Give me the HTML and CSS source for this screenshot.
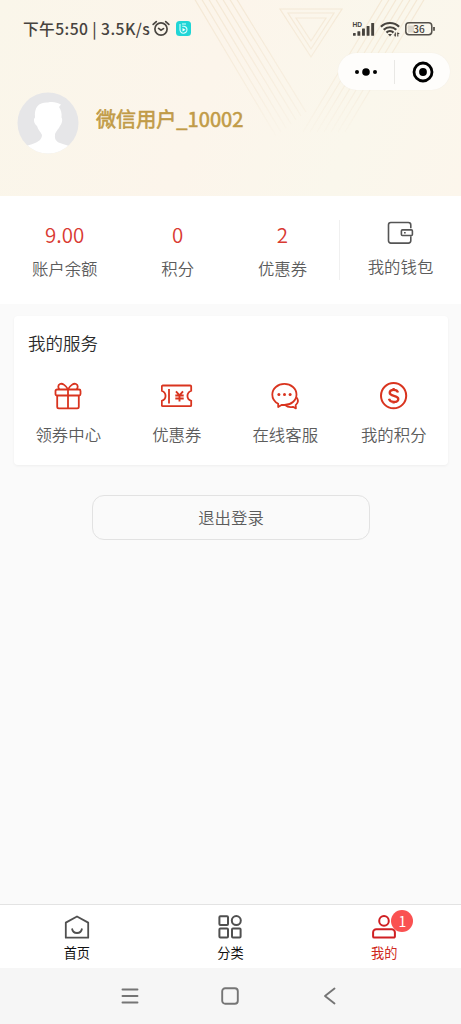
FILE: index.html
```html
<!DOCTYPE html>
<html lang="zh-CN">
<head>
<meta charset="utf-8">
<meta name="viewport" content="width=device-width, initial-scale=1">
<title>我的</title>
<link rel="stylesheet" href="styles.css">
</head>
<body>
<div class="screen">
  <header class="hero">
    <svg class="hero-art" width="461" height="196" viewBox="0 0 461 196" fill="none">
      <defs>
        <linearGradient id="fade" x1="0" y1="0" x2="0" y2="1"><stop offset="0" stop-color="#fff"/><stop offset=".7" stop-color="#fff" stop-opacity=".45"/><stop offset="1" stop-color="#fff" stop-opacity="0"/></linearGradient>
        <mask id="soft"><rect width="461" height="140" fill="url(#fade)"/></mask>
      </defs>
      <g mask="url(#soft)" stroke="#f4e8d5" stroke-width="1.2">
        <path d="M194-2l82 138M201-2l80 134M208-2l78 130M215-2l76 126M222-2l74 122M229-2l72 118M236-2l70 114"/>
        <path d="M383-2l-80 134M390-2l-80 134M397-2l-80 134M404-2l-80 134M411-2l-80 134M418-2l-80 134M425-2l-80 134"/>
        <path d="M280 9h62l-31 48zM288 13h46l-23 36zM296 18h30l-15 23z"/>
      </g>
    </svg>
    <div class="status">
      <div class="status-left">
        <span class="clock">下午5:50 | 3.5K/s</span>
        <svg width="18" height="17" viewBox="0 0 18 17" fill="none" stroke="#4a4641" stroke-width="1.7" stroke-linecap="round"><circle cx="9" cy="9" r="6.1"/><path d="M6.6 8.4L9 10.2l2.5-1.6M1.2 4.4L4.3 1.6M16.8 4.4l-3.1-2.8"/></svg>
        <svg class="app-icon" width="15" height="15" viewBox="0 0 15 15" fill="none"><rect width="15" height="15" rx="3.5" fill="#20d5d6"/><path d="M4 3v5.500a3.500 3.500 0 1 0 3.500-3.300H6.200M6 3h4" stroke="#d9ffff" stroke-width="1.1"/><path d="M6.500 7l3 1.700-3 1.700z" fill="#fff"/></svg>
      </div>
      <div class="status-right">
        <svg class="signal" width="24" height="22" viewBox="-2 -3 24 22"><g fill="#47433e"><rect x="0" y="12" width="2.700" height="2.800" rx=".5"/><rect x="4.400" y="10.200" width="2.900" height="4.600" rx=".5"/><rect x="9" y="7.500" width="2.900" height="7.300" rx=".5"/><rect x="13.600" y="5" width="2.900" height="9.800" rx=".5"/><rect x="18.200" y="2" width="2.900" height="12.800" rx=".5"/></g><text class="hd" x="-.6" y="6.300">HD</text></svg>
        <svg width="20" height="16" viewBox="0 0 20 16" fill="none" stroke="#47433e" stroke-width="2.200"><path d="M.9 5.700a13 13 0 0 1 18.200 0M3.700 8.800a9 9 0 0 1 12.600 0M6.500 11.600a5 5 0 0 1 7 0"/><path d="M8 13h4l-2 2.600z" fill="#47433e" stroke="none"/><path d="M15.300 11.500v4M17.800 11.500v4" stroke-width="1.100"/><path d="M13.900 14h1.700M17.600 12.500h1.700" stroke-width="1"/></svg>
        <svg width="31" height="14" viewBox="0 0 31 14" fill="none"><path d="M3 3.500h6v7H3z" fill="#ddd8cf"/><rect x=".8" y=".8" width="26" height="12" rx="3.200" stroke="#55514b" stroke-width="1.500"/><path d="M29 5v3.800" stroke="#55514b" stroke-width="1.800"/><text class="battery" x="14" y="10.500">36</text></svg>
      </div>
    </div>
    <div class="capsule">
      <svg width="24" height="10" viewBox="0 0 24 10"><circle cx="3" cy="5" r="2"/><circle cx="12" cy="5" r="3.800"/><circle cx="21" cy="5" r="2"/></svg>
      <i class="capsule-line"></i>
      <svg width="22" height="22" viewBox="0 0 22 22"><circle cx="11" cy="11" r="9" fill="none" stroke="#000" stroke-width="2.800"/><circle cx="11" cy="11" r="3.900"/></svg>
    </div>
    <div class="profile">
      <svg width="62" height="62" viewBox="0 0 62 62"><defs><clipPath id="round"><circle cx="31" cy="31" r="30.500"/></clipPath></defs><g clip-path="url(#round)"><path fill="#e6e6e8" d="M0 0h62v62H0z"/><path fill="#fff" d="M18 25.500C17 15 22 10 31 10.500C36 9.500 40 10.500 44 12.500L42 15C44 18 45 21 44.500 25.500C46 27 45 32 43 34C41 38 38 40 38 43C37.500 47 39 49.500 43 51C48 52.500 52 54 56 56V62H5V56C9 54 14 52.500 18 51C23 49 25 46 25 43C24 40 21 38 20 34C17 32 16 27 18 25.500Z"/></g></svg>
      <h1 class="name">微信用户_10002</h1>
    </div>
  </header>

  <section class="account">
    <div class="stats">
      <div class="stat"><span class="value">9.00</span><span class="label">账户余额</span></div>
      <div class="stat"><span class="value">0</span><span class="label">积分</span></div>
      <div class="stat"><span class="value">2</span><span class="label">优惠券</span></div>
    </div>
    <div class="wallet">
      <svg width="27" height="24" viewBox="0 0 27 24" fill="none" stroke="#555" stroke-width="1.600"><path d="M23.800 7.300V4a2.500 2.500 0 0 0-2.500-2.500H3.800A2.300 2.300 0 0 0 1.500 3.800v16a2.300 2.300 0 0 0 2.300 2.300h17.700a2.300 2.300 0 0 0 2.300-2.300v-4.600"/><rect x="14.400" y="8.900" width="11" height="5.600" rx="1"/><path d="M17 11.700h1.700"/></svg>
      <span class="label">我的钱包</span>
    </div>
  </section>

  <section class="services">
    <h2 class="services-title">我的服务</h2>
    <div class="service-grid">
      <div class="service">
        <svg width="28" height="28" viewBox="0 0 28 28" fill="none" stroke="#d9341f" stroke-width="1.800"><rect x="1.500" y="7.500" width="25" height="6" rx="1.500"/><path d="M3.200 13.500v11.200a1.600 1.600 0 0 0 1.600 1.600h18.400a1.600 1.600 0 0 0 1.600-1.600V13.500M14 7.500v18.800M14 7.500C12 3.500 8.500 1 6 2S4.200 6 5.300 7.500M14 7.500c2-4 5.500-6.500 8-5.500s1.800 4 .7 5.500"/></svg>
        <span class="label">领券中心</span>
      </div>
      <div class="service">
        <svg width="32" height="28" viewBox="0 0 32 28" fill="none" stroke="#d9341f" stroke-width="1.800"><path d="M1.800 3.500h27.400a1 1 0 0 1 1 1v4.300c-5 2.200-5 8 0 10v4.400a1 1 0 0 1-1 1H1.800a1 1 0 0 1-1-1v-4.400c5-2 5-7.800 0-10V4.500a1 1 0 0 1 1-1zM8 7v14.500"/><path d="M15 9.300l3.500 4 3.500-4M14.300 13.500h8.400M14.300 16.500h8.400M18.500 13.500v6" stroke-width="1.900"/></svg>
        <span class="label">优惠券</span>
      </div>
      <div class="service">
        <svg width="28" height="28" viewBox="0 0 28 28" fill="none" stroke="#d9341f" stroke-width="1.800" stroke-linejoin="round"><path d="M7.200 25v-3.200C3.500 19.800 1.300 16.400 1.300 12.500c0-6 5.400-10.600 12.100-10.600s12.100 4.700 12.100 10.600S20.100 23 13.400 23c-.9 0-1.700 0-2.500-.2z"/><path d="M25.600 15.500c1.900 2.600 1.600 5.500-.9 7.600l.2 3.300-3-1.600c-2.900.7-5.500.2-7.700-1.700"/><g fill="#d9341f" stroke="none"><circle cx="7.900" cy="12.500" r="1.500"/><circle cx="13.500" cy="12.500" r="1.500"/><circle cx="19.100" cy="12.500" r="1.500"/></g></svg>
        <span class="label">在线客服</span>
      </div>
      <div class="service">
        <svg width="28" height="28" viewBox="0 0 28 28" fill="none" stroke="#d9341f"><circle cx="13.600" cy="13.700" r="12.600" stroke-width="2"/><path d="M18 10.500c-.5-1.700-2.100-2.600-4.300-2.600-2.400 0-4 1-4 2.800 0 4.200 8.600 1.900 8.600 6.200 0 1.800-1.800 3-4.500 3s-4.300-1.200-4.800-3.200M13.600 6v2M13.600 19.500v2" stroke-width="2.300"/></svg>
        <span class="label">我的积分</span>
      </div>
    </div>
  </section>

  <button class="logout">退出登录</button>

  <nav class="tabs">
    <div class="tab">
      <svg width="26" height="26" viewBox="0 0 26 26" fill="none" stroke="#505050" stroke-width="1.800" stroke-linejoin="round"><path d="M1.800 8.600L13 2.500l11.200 6.100v15.100H1.800z"/><path d="M8 14.500c.5 3 2.500 4.500 5 4.500s4.500-1.500 5-4.500"/></svg>
      <span>首页</span>
    </div>
    <div class="tab">
      <svg width="26" height="26" viewBox="0 0 26 26" fill="none" stroke="#505050" stroke-width="2"><rect x="2.400" y="2.300" width="8.600" height="8.600" rx="1"/><circle cx="19.300" cy="6.600" r="4.500"/><rect x="2.400" y="14.500" width="8.600" height="8.900" rx="1"/><rect x="15" y="14.500" width="8.600" height="8.900" rx="1"/></svg>
      <span>分类</span>
    </div>
    <div class="tab active">
      <svg width="26" height="26" viewBox="0 0 26 26" fill="none" stroke="#cf1f22" stroke-width="2"><circle cx="13" cy="6.900" r="4.800"/><path d="M5.300 15.200h15.400a3.200 3.200 0 0 1 3.200 3.200v4a1.200 1.200 0 0 1-1.200 1.200H3.300a1.200 1.200 0 0 1-1.200-1.200v-4a3.200 3.200 0 0 1 3.200-3.200z"/></svg>
      <span>我的</span>
      <b class="badge">1</b>
    </div>
  </nav>
  <footer class="system">
    <svg width="18" height="18" viewBox="0 0 18 18" fill="none" stroke="#757575" stroke-width="1.900" stroke-linecap="round"><path d="M1.500 2.500h15M1.500 9h15M1.500 15.500h15"/></svg>
    <svg width="18" height="18" viewBox="0 0 18 18" fill="none" stroke="#757575" stroke-width="1.900"><rect x="1.200" y="1.200" width="15.600" height="15.600" rx="3"/></svg>
    <svg width="18" height="18" viewBox="0 0 18 18" fill="none" stroke="#757575" stroke-width="1.900" stroke-linecap="round" stroke-linejoin="round"><path d="M13.500 1.500L4 9l9.500 7.500"/></svg>
  </footer>
</div>
</body>
</html>
```
FILE: styles.css
```css
* { box-sizing: border-box; }
body {
  margin: 0;
  background: #fafafa;
  color: #333;
  font-family: "Noto Sans CJK SC", "Noto Sans", sans-serif;
}
svg { display: block; flex: none; }
h1, h2 { margin: 0; font-weight: 400; }

.screen {
  width: 461px;
  height: 1024px;
  display: flex;
  flex-direction: column;
  overflow: hidden;
}

.hero {
  position: relative;
  height: 196px;
  flex: none;
  padding: 18px 11px 0 17px;
  background: linear-gradient(110deg, #faf6ea 0%, #fcf5eb 45%, #faf7ec 75%, #fcf6ec 100%);
}
.hero-art { position: absolute; left: 0; top: 0; }
.status {
  position: relative;
  display: flex;
  justify-content: space-between;
  align-items: center;
  height: 21px;
  padding: 0 14px 0 6px;
}
.status-left, .status-right { display: flex; align-items: center; }
.clock {
  width: 129px;
  font-size: 15.7px;
  font-weight: 500;
  letter-spacing: .42px;
  line-height: 21px;
  white-space: nowrap;
  color: #47433e;
}
.app-icon { margin-left: 6px; }
.status-right { gap: 5px; }
.signal { overflow: visible; }
.hd { font: 700 6.6px "Liberation Sans", sans-serif; fill: #47433e; }
.battery { font: 500 10px "Noto Sans CJK SC", sans-serif; text-anchor: middle; fill: #47433e; }

.capsule {
  position: relative;
  display: flex;
  align-items: center;
  width: 112px;
  height: 37px;
  margin: 14px 0 0 auto;
  padding-left: 16px;
  border-radius: 19px;
  background: #fefdfb;
  box-shadow: 0 0 1px #ece8df;
}
.capsule-line { width: 1px; height: 24px; margin: 0 17px 0 16px; background: #e9e8e5; }

.profile {
  position: relative;
  display: flex;
  align-items: flex-start;
  gap: 17px;
  margin-top: 2px;
}
.name {
  margin-top: 12px;
  font-size: 20.1px;
  line-height: 30px;
  color: #c19b47;
  -webkit-text-stroke: .6px #c19b47;
}

.account { display: flex; height: 108px; flex: none; background: #fff; }
.stats {
  display: flex;
  justify-content: space-around;
  width: 340px;
  height: 60px;
  margin-top: 24px;
  border-right: 1px solid #f0f0f0;
}
.stat { display: flex; flex-direction: column; align-items: center; }
.value { margin-top: -1px; font-size: 20.5px; font-weight: 350; line-height: 30px; color: #d93a32; }
.label { font-size: 16.4px; font-weight: 350; line-height: 24px; color: #5c5c5c; }
.stat .label { margin-top: 7px; }
.wallet { flex: 1; display: flex; flex-direction: column; align-items: center; padding-top: 25px; }
.wallet .label { margin-top: 9px; }

.services {
  flex: none;
  height: 149px;
  margin: 12px 13px 0 14px;
  border-radius: 4px;
  background: #fff;
  box-shadow: 0 1px 3px rgba(0, 0, 0, .05);
}
.services-title { padding: 14px 14px 0; font-size: 17.5px; font-weight: 350; line-height: 26px; color: #2b2b2b; }
.service-grid { display: grid; grid-template-columns: repeat(4, 1fr); margin-top: 26px; }
.service { display: flex; flex-direction: column; align-items: center; gap: 12px; }

.logout {
  flex: none;
  width: 278px;
  height: 45px;
  margin: 30px 0 0 92px;
  padding: 0;
  border: 1px solid #e2e2e2;
  border-radius: 12px;
  background: #fafafa;
  color: #5c5c5c;
  font: 350 16.4px/43px "Noto Sans CJK SC", sans-serif;
}

.tabs {
  display: grid;
  grid-template-columns: repeat(3, 1fr);
  flex: none;
  height: 64px;
  margin-top: auto;
  border-top: 1px solid #e3e3e3;
  background: #fff;
}
.tab {
  position: relative;
  display: flex;
  flex-direction: column;
  align-items: center;
  padding-top: 9px;
  font-size: 13.2px;
  line-height: 20px;
  color: #111;
}
.tab span { margin-top: 3px; }
.tab.active { color: #cf2a20; }
.badge {
  position: absolute;
  left: 84px;
  top: 5px;
  width: 22px;
  height: 22px;
  border-radius: 50%;
  background: #fa5151;
  color: #fff;
  font-size: 14px;
  font-weight: 400;
  line-height: 22px;
  text-align: center;
}
.system {
  display: flex;
  justify-content: center;
  gap: 82px;
  flex: none;
  height: 56px;
  padding: 19px 1px 0 0;
  background: #f6f6f6;
}
```
